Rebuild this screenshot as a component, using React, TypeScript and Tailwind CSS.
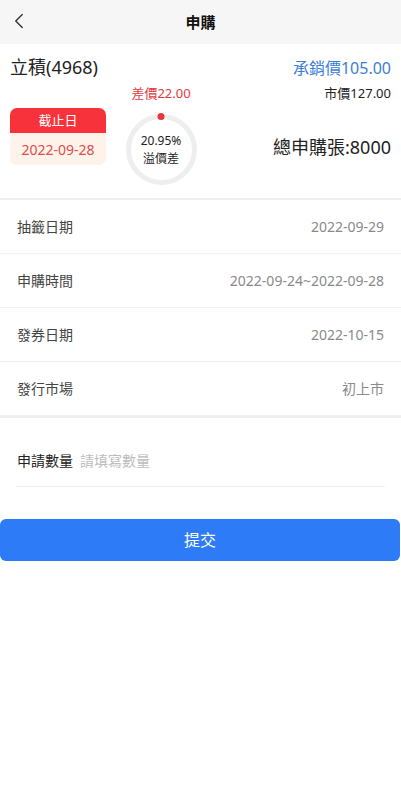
import { ChevronLeft } from "lucide-react";

const rows = [
  { label: "抽籤日期", value: "2022-09-29" },
  { label: "申購時間", value: "2022-09-24~2022-09-28" },
  { label: "發券日期", value: "2022-10-15" },
  { label: "發行市場", value: "初上市" },
];

const App = () => {
  return (
    <div
      className="min-h-[798px] w-full bg-white"
      style={{ fontFamily: '"Noto Sans", "Noto Sans CJK TC", sans-serif' }}
    >
      {/* Header */}
      <header className="relative flex h-[44px] items-center justify-center bg-[#f6f6f6]">
        <ChevronLeft
          className="absolute left-[6px] top-[8px] h-[26px] w-[26px] text-[#333]"
          strokeWidth={1.3}
        />
        <h1 className="text-[15px] font-bold text-[#111]">申購</h1>
      </header>

      {/* Summary */}
      <section className="border-b-2 border-[#efefef] px-[10px] pb-[13px]">
        <div className="flex items-center justify-between pt-[10px]">
          <span className="text-[18px] text-[#222]">立積(4968)</span>
          <span className="text-[16px] text-[#3b7ed8]">承銷價105.00</span>
        </div>
        <div className="mt-[3px] flex">
          <div className="w-[96px] shrink-0 pt-[24px]">
            <div className="overflow-hidden rounded-[7px]">
              <div className="flex h-[25px] items-center justify-center bg-[#f8323a] text-[13px] text-white">
                截止日
              </div>
              <div className="flex h-[32px] items-center justify-center bg-[#fdf3eb] text-[14px] text-[#e04b4b]">
                2022-09-28
              </div>
            </div>
          </div>
          <div className="ml-[19px] flex w-[72px] shrink-0 flex-col items-center">
            <span className="text-[13px] leading-[18px] text-[#e2393f]">差價22.00</span>
            <div className="relative mt-[12px] flex h-[71px] w-[71px] flex-col items-center justify-center rounded-full border-[5px] border-[#eeeeee]">
              <span className="absolute left-1/2 top-[-6px] h-[7px] w-[7px] -translate-x-1/2 rounded-full bg-[#e8353b]" />
              <span className="text-[12px] leading-[18px] text-[#222]">20.95%</span>
              <span className="text-[12px] leading-[18px] text-[#222]">溢價差</span>
            </div>
          </div>
          <div className="flex flex-1 flex-col items-end">
            <span className="text-[13px] leading-[18px] text-[#222]">市價127.00</span>
            <span className="mt-[32px] text-[18px] text-[#222]">總申購張:8000</span>
          </div>
        </div>
      </section>

      {/* Info rows */}
      <div>
        {rows.map((row) => (
          <div
            key={row.label}
            className="flex h-[54px] items-center justify-between border-b border-[#f2f2f2] px-[17px] text-[14px]"
          >
            <span className="text-[#444]">{row.label}</span>
            <span className="text-[#8a8a8a]">{row.value}</span>
          </div>
        ))}
      </div>
      <div className="h-[2px] bg-[#efefef]" />

      {/* Quantity input */}
      <div className="px-[16px] pt-[33px]">
        <label className="flex items-center border-b border-[#f0f0f0] pb-[15px] text-[14px] leading-[20px]">
          <span className="ml-[1px] text-[#222]">申請數量</span>
          <input
            className="ml-[7px] flex-1 bg-transparent text-[14px] leading-[20px] outline-none placeholder:text-[#bdbdbd]"
            placeholder="請填寫數量"
          />
        </label>
      </div>

      <div className="pt-[32px] pr-[1px]">
        <button className="flex h-[42px] w-full items-center justify-center rounded-[6px] bg-[#2d7bf6] text-[16px] text-white">
          提交
        </button>
      </div>
    </div>
  );
};

export default App;
